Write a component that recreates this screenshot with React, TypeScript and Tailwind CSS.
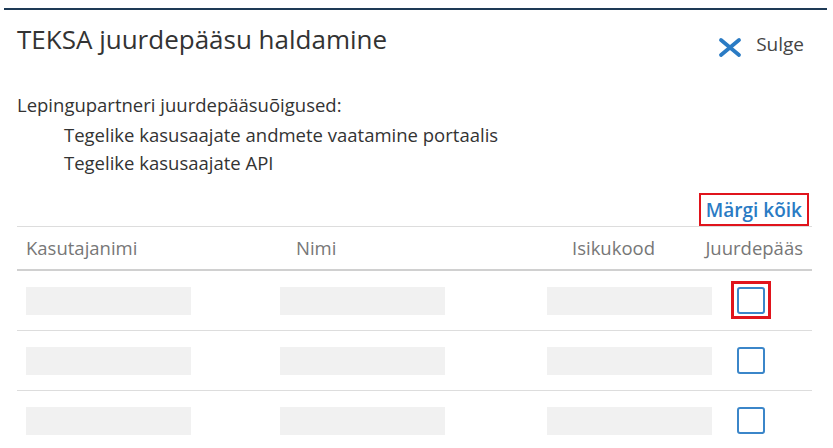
const rows = [0, 1, 2];

function CloseIcon() {
  return (
    <svg className="mt-[6px] h-[21px] w-[24px]" viewBox="0 0 24 21" fill="none">
      <path d="M3 3 L21 18 M21 3 L3 18" stroke="#2a7bc4" strokeWidth={3.8} strokeLinecap="round" />
    </svg>
  );
}

function Bar() {
  return <div className="h-[28px] w-[165px] bg-[#f1f1f1]" />;
}

function Checkbox() {
  return <div className="h-[27px] w-[28px] rounded-[3px] border-2 border-[#3b86c9] bg-white" />;
}

export default function App() {
  return (
    <div className="h-[448px] w-[833px] overflow-hidden bg-white font-['Open_Sans',sans-serif] text-[#333]">
      <div className="mx-[4px] mt-[8px] h-[2px] w-[823px] bg-[#1e3a56]" />
      <div className="px-[17px]">
        <div className="flex items-start justify-between pt-[12px]">
          <h1 className="text-[26px] leading-[34px] text-[#333]">TEKSA juurdepääsu haldamine</h1>
          <button className="mr-[12px] mt-[8px] flex items-center gap-[14px] text-[19px] leading-[28px] text-[#444]">
            <CloseIcon />
            Sulge
          </button>
        </div>

        <p className="mt-[33px] text-[18.5px] leading-[28px]">Lepingupartneri juurdepääsuõigused:</p>
        <ul className="mt-[2px] pl-[47px] text-[18.5px] leading-[28px]">
          <li>Tegelike kasusaajate andmete vaatamine portaalis</li>
          <li>Tegelike kasusaajate API</li>
        </ul>

        <div className="mt-[16px] flex w-[795px] justify-end pr-[3px]">
          <button className="h-[33px] border-2 border-[#e0141c] px-[5px] text-[19px] font-semibold leading-[28px] text-[#2a7bc4]">
            Märgi kõik
          </button>
        </div>

        <div className="w-[795px]">
          <div className="grid h-[45px] grid-cols-[254px_267px_160px_1fr] items-center border-t border-b-2 border-t-[#ddd] border-b-[#d0d0d0] text-[18.5px] text-[#777]">
            <div className="pl-[9px]">Kasutajanimi</div>
            <div className="pl-[25px]">Nimi</div>
            <div className="pr-[43px] text-right">Isikukood</div>
            <div className="flex justify-end whitespace-nowrap pr-[9px]">Juurdepääs</div>
          </div>
          {rows.map((r) => (
            <div
              key={r}
              className="grid h-[60px] grid-cols-[254px_267px_160px_1fr] items-center border-b border-[#ddd]"
            >
              <div className="pl-[9px]">
                <Bar />
              </div>
              <div className="pl-[9px]">
                <Bar />
              </div>
              <div className="pl-[9px]">
                <Bar />
              </div>
              <div className="pl-[39px]">
                {r === 0 ? (
                  <div className="-ml-[6px] inline-flex border-[3px] border-[#e0141c] p-[3px] pb-[2px]">
                    <Checkbox />
                  </div>
                ) : (
                  <Checkbox />
                )}
              </div>
            </div>
          ))}
        </div>
      </div>
    </div>
  );
}
